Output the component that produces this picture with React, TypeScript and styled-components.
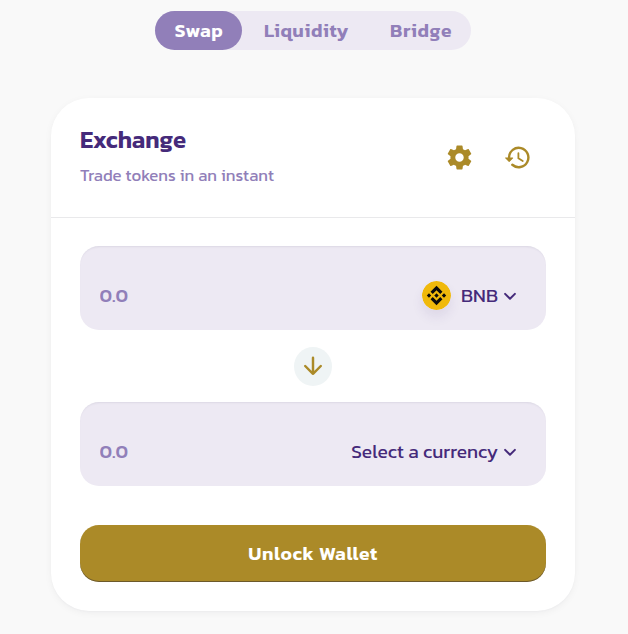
import { useState } from "react";
import styled, { createGlobalStyle, ThemeProvider } from "styled-components";

const theme = {
  colors: {
    background: "#f9f9f9",
    card: "#ffffff",
    primary: "#ab8a28",
    secondary: "#917fb9",
    text: "#452a7a",
    input: "#ede9f3",
    border: "#e9e9eb",
    arrow: "#eff4f5",
  },
};

const GlobalStyle = createGlobalStyle`
  * {
    box-sizing: border-box;
  }
  body {
    margin: 0;
    background: ${theme.colors.background};
    font-family: Kanit, "Noto Sans", sans-serif;
  }
  button, input {
    font-family: inherit;
  }
`;

const Page = styled.main`
  display: flex;
  flex-direction: column;
  align-items: center;
  height: 634px;
  padding: 11px 2px 0 0;
  overflow: hidden;
`;

const Tabs = styled.nav`
  display: flex;
  height: 39px;
  margin: 0 0 48px;
  border-radius: 20px;
  background: ${(props) => props.theme.colors.input};
`;

const Tab = styled.button<{ $active: boolean; $width: number }>`
  width: ${(props) => props.$width}px;
  height: 39px;
  padding: 0 0 1px 1px;
  border: none;
  border-radius: 20px;
  font-size: 19.2px;
  font-weight: 600;
  white-space: nowrap;
  letter-spacing: 0.03em;
  color: ${(props) => (props.$active ? "#ffffff" : props.theme.colors.secondary)};
  background: ${(props) => (props.$active ? props.theme.colors.secondary : "transparent")};
  cursor: pointer;
`;

const Card = styled.section`
  width: 524px;
  height: 513px;
  border-radius: 38px;
  background: ${(props) => props.theme.colors.card};
  box-shadow: 0 2px 10px -2px rgba(25, 19, 38, 0.07), 0 1px 2px rgba(25, 19, 38, 0.02);
`;

const CardHeader = styled.header`
  display: flex;
  justify-content: space-between;
  height: 120px;
  padding: 26px 43px 0 29px;
  border-bottom: 1px solid ${(props) => props.theme.colors.border};
`;

const Title = styled.h1`
  margin: 0;
  font-size: 24px;
  line-height: 32px;
  font-weight: 600;
  color: ${(props) => props.theme.colors.text};
`;

const Subtitle = styled.p`
  margin: 8px 0 0;
  font-size: 16.8px;
  line-height: 24px;
  letter-spacing: 0.03px;
  white-space: nowrap;
  color: ${(props) => props.theme.colors.secondary};
`;

const HeaderActions = styled.div`
  display: flex;
  gap: 29px;
  height: 29px;
  margin-top: 19px;
`;

const IconButton = styled.button`
  display: flex;
  padding: 0;
  border: none;
  background: none;
  color: ${(props) => props.theme.colors.primary};
  cursor: pointer;
`;

const CardBody = styled.div`
  display: flex;
  flex-direction: column;
  align-items: center;
  padding: 28px 29px 0;
`;

const CurrencyPanel = styled.div`
  display: flex;
  align-items: center;
  width: 100%;
  height: 84px;
  padding: 15px 24px 0 19.5px;
  border-radius: 19px;
  background: ${(props) => props.theme.colors.input};
  box-shadow: inset 0 2px 2px -1px rgba(74, 74, 104, 0.1);
`;

const AmountInput = styled.input`
  flex: 1;
  min-width: 0;
  padding: 0;
  border: none;
  outline: none;
  font-size: 19.2px;
  font-weight: 500;
  color: ${(props) => props.theme.colors.text};
  background: none;
  &::placeholder {
    color: ${(props) => props.theme.colors.secondary};
    opacity: 1;
  }
`;

const CurrencySelect = styled.button`
  display: flex;
  align-items: center;
  padding: 0;
  border: none;
  font-size: 19.2px;
  font-weight: 400;
  white-space: nowrap;
  color: ${(props) => props.theme.colors.text};
  background: none;
  cursor: pointer;
`;

const TokenLogo = styled.svg`
  margin-right: 10px;
  border-radius: 50%;
  box-shadow: 0 7px 12px rgba(69, 42, 122, 0.09);
`;

const SwitchButton = styled(IconButton)`
  align-items: center;
  justify-content: center;
  width: 38px;
  height: 39px;
  margin: 17px 0 16px;
  padding-bottom: 2px;
  border-radius: 50%;
  background: ${(props) => props.theme.colors.arrow};
`;

const UnlockButton = styled.button`
  width: 100%;
  height: 57px;
  margin-top: 39px;
  padding: 0;
  border: none;
  border-radius: 19px;
  font-size: 19.2px;
  font-weight: 600;
  letter-spacing: 0.03em;
  color: #ffffff;
  background: ${(props) => props.theme.colors.primary};
  box-shadow: inset 0 -1px 0 rgba(14, 14, 44, 0.4);
  cursor: pointer;
`;

const tabs = [
  { label: "Swap", width: 87 },
  { label: "Liquidity", width: 128 },
  { label: "Bridge", width: 101 },
];

function ChevronIcon() {
  return (
    <svg width="24" height="24" viewBox="0 0 24 24" fill="none">
      <path
        d="M7.1 9.9L12 14.7L16.9 9.9"
        stroke="currentColor"
        strokeWidth="2"
        strokeLinecap="round"
        strokeLinejoin="round"
      />
    </svg>
  );
}

function SettingsIcon() {
  return (
    <svg width="29" height="29" viewBox="0 0 24 24" fill="currentColor">
      <path d="M19.43 12.98c.04-.32.07-.64.07-.98s-.03-.66-.07-.98l2.11-1.65c.19-.15.24-.42.12-.64l-2-3.46c-.12-.22-.39-.3-.61-.22l-2.49 1c-.52-.4-1.08-.73-1.69-.98l-.38-2.65C14.46 2.18 14.25 2 14 2h-4c-.25 0-.46.18-.49.42l-.38 2.65c-.61.25-1.17.59-1.69.98l-2.49-1c-.23-.09-.49 0-.61.22l-2 3.46c-.13.22-.07.49.12.64l2.11 1.65c-.04.32-.07.65-.07.98s.03.66.07.98l-2.11 1.65c-.19.15-.24.42-.12.64l2 3.46c.12.22.39.3.61.22l2.49-1c.52.4 1.08.73 1.69.98l.38 2.65c.03.24.24.42.49.42h4c.25 0 .46-.18.49-.42l.38-2.65c.61-.25 1.17-.59 1.69-.98l2.49 1c.23.09.49 0 .61-.22l2-3.46c.12-.22.07-.49-.12-.64l-2.11-1.65zM12 15.5c-1.93 0-3.5-1.57-3.5-3.5s1.57-3.5 3.5-3.5 3.5 1.57 3.5 3.5-1.57 3.5-3.5 3.5z" />
    </svg>
  );
}

function HistoryIcon() {
  return (
    <svg width="29" height="29" viewBox="0 0 24 24" fill="none" stroke="currentColor">
      <path d="M5 12a8 8 0 1 1 2.7 6" strokeWidth="2" strokeLinecap="round" />
      <path
        d="M2.2 12.4h5.8L5.1 15.3z"
        fill="currentColor"
        strokeWidth="0.9"
        strokeLinejoin="round"
      />
      <path d="M12.75 8.4v4.3l3.6 2.15" strokeWidth="1.5" strokeLinecap="round" />
    </svg>
  );
}

function ArrowIcon() {
  return (
    <svg width="28" height="28" viewBox="0 0 24 24" fill="none">
      <path
        d="M12 4.9v13.8M5.3 12l6.7 6.7 6.7-6.7"
        stroke="currentColor"
        strokeWidth="2.1"
        strokeLinecap="round"
        strokeLinejoin="round"
      />
    </svg>
  );
}

function BnbLogo() {
  return (
    <TokenLogo width="29" height="29" viewBox="0 0 32 32">
      <circle cx="16" cy="16" r="16" fill="#f0b90b" />
      <path
        fill="#0b0b0b"
        transform="translate(16 16) scale(1.07) translate(-16 -16)"
        d="M12.116 14.404L16 10.52l3.886 3.886 2.26-2.26L16 6l-6.144 6.144 2.26 2.26zM6 16l2.26-2.26L10.52 16l-2.26 2.26L6 16zm6.116 1.596L16 21.48l3.886-3.886 2.26 2.259L16 26l-6.144-6.144-.003-.003 2.263-2.257zM21.48 16l2.26-2.26L26 16l-2.26 2.26L21.48 16zm-3.188-.002h.002V16L16 18.294l-2.291-2.29-.004-.004.004-.003.401-.402.195-.195L16 13.706l2.293 2.293z"
      />
    </TokenLogo>
  );
}

function App() {
  const [activeTab, setActiveTab] = useState("Swap");
  const [amounts, setAmounts] = useState({ from: "", to: "" });

  function handleAmount(e: React.ChangeEvent<HTMLInputElement>) {
    setAmounts({ ...amounts, [e.target.name]: e.target.value });
  }

  return (
    <ThemeProvider theme={theme}>
      <GlobalStyle />
      <Page>
        <Tabs>
          {tabs.map((tab) => (
            <Tab
              key={tab.label}
              $active={activeTab === tab.label}
              $width={tab.width}
              onClick={() => setActiveTab(tab.label)}
            >
              {tab.label}
            </Tab>
          ))}
        </Tabs>
        <Card>
          <CardHeader>
            <div>
              <Title>Exchange</Title>
              <Subtitle>Trade tokens in an instant</Subtitle>
            </div>
            <HeaderActions>
              <IconButton>
                <SettingsIcon />
              </IconButton>
              <IconButton>
                <HistoryIcon />
              </IconButton>
            </HeaderActions>
          </CardHeader>
          <CardBody>
            <CurrencyPanel>
              <AmountInput
                name="from"
                placeholder="0.0"
                value={amounts.from}
                onChange={handleAmount}
              />
              <CurrencySelect>
                <BnbLogo />
                BNB
                <ChevronIcon />
              </CurrencySelect>
            </CurrencyPanel>
            <SwitchButton>
              <ArrowIcon />
            </SwitchButton>
            <CurrencyPanel>
              <AmountInput
                name="to"
                placeholder="0.0"
                value={amounts.to}
                onChange={handleAmount}
              />
              <CurrencySelect>
                Select a currency
                <ChevronIcon />
              </CurrencySelect>
            </CurrencyPanel>
            <UnlockButton>Unlock Wallet</UnlockButton>
          </CardBody>
        </Card>
      </Page>
    </ThemeProvider>
  );
}

export default App;
